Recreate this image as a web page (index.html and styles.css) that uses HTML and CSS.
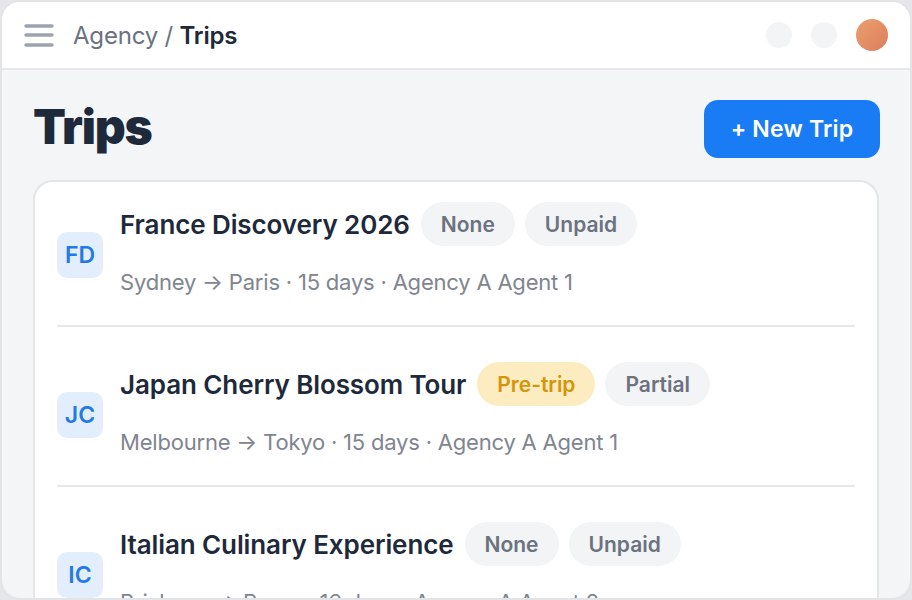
FILE: index.html
```html
<!DOCTYPE html>
<html>
<head>
<meta charset="utf-8">
<link rel="stylesheet" href="styles.css">
</head>
<body>
<div class="window">
  <header class="topbar">
    <svg class="menu" width="32" height="26" viewBox="0 0 32 26"><path d="M3 4h26M3 13h26M3 23h26" stroke="#9ca3af" stroke-width="3.4" stroke-linecap="round"/></svg>
    <div class="crumbs"><span class="crumb-muted">Agency / </span><span class="crumb-current">Trips</span></div>
    <div class="top-actions">
      <span class="dot"></span>
      <span class="dot"></span>
      <span class="avatar-user"></span>
    </div>
  </header>
  <main class="content">
    <div class="page-head">
      <h1 class="page-title">Trips</h1>
      <button class="btn-primary">+ New Trip</button>
    </div>
    <section class="card">
      <div class="trip">
        <div class="initials">FD</div>
        <div class="trip-body">
          <div class="trip-head">
            <span class="trip-name">France Discovery 2026</span>
            <span class="pill">None</span>
            <span class="pill">Unpaid</span>
          </div>
          <div class="trip-meta">Sydney → Paris · 15 days · Agency A Agent 1</div>
        </div>
      </div>
      <div class="trip">
        <div class="initials">JC</div>
        <div class="trip-body">
          <div class="trip-head">
            <span class="trip-name">Japan Cherry Blossom Tour</span>
            <span class="pill pill-warn">Pre-trip</span>
            <span class="pill">Partial</span>
          </div>
          <div class="trip-meta">Melbourne → Tokyo · 15 days · Agency A Agent 1</div>
        </div>
      </div>
      <div class="trip">
        <div class="initials">IC</div>
        <div class="trip-body">
          <div class="trip-head">
            <span class="trip-name">Italian Culinary Experience</span>
            <span class="pill">None</span>
            <span class="pill">Unpaid</span>
          </div>
          <div class="trip-meta">Brisbane → Rome · 16 days · Agency A Agent 2</div>
        </div>
      </div>
    </section>
  </main>
</div>
</body>
</html>
```

FILE: styles.css
```css
* { box-sizing: border-box; }
html, body { margin: 0; padding: 0; }
body {
  background: #e5e7eb;
  font-family: Inter, "Noto Sans", sans-serif;
  width: 912px;
  height: 600px;
  overflow: hidden;
}
.window {
  width: 912px;
  height: 600px;
  border: 2px solid #e2e4e8;
  border-radius: 20px;
  overflow: hidden;
  background: #f4f5f7;
  display: flex;
  flex-direction: column;
}
.topbar {
  height: 68px;
  flex: none;
  background: #fff;
  border-bottom: 2px solid #e5e7eb;
  display: flex;
  align-items: center;
  padding: 0 22px 0 21px;
}
.menu { display: block; margin-right: 18px; }
.crumbs { font-size: 24px; letter-spacing: -0.2px; }
.crumb-muted { color: #6b7280; }
.crumb-current { color: #1e293b; font-weight: 600; }
.top-actions {
  margin-left: auto;
  display: flex;
  align-items: center;
  gap: 19px;
}
.dot {
  width: 26px; height: 26px; border-radius: 50%;
  background: #f3f4f6;
}
.avatar-user {
  width: 32px; height: 32px; border-radius: 50%;
  background: linear-gradient(135deg, #eba06f, #dc7d5c);
}
.content {
  padding: 30px 31px 0 31px;
  flex: 1;
}
.page-head {
  display: flex;
  justify-content: space-between;
  align-items: center;
  height: 58px;
}
.page-title {
  margin: 0 0 4px 0;
  font-size: 48px;
  font-weight: 900;
  letter-spacing: -1.2px;
  color: #1e293b;
  line-height: 1;
}
.btn-primary {
  height: 58px;
  width: 176px;
  border: none;
  border-radius: 14px;
  background: #1a7cf5;
  color: #fff;
  font-family: inherit;
  font-size: 23px;
  font-weight: 600;
  letter-spacing: 0.2px;
  margin-right: -1px;
}
.card {
  margin-top: 22px;
  background: #fff;
  border: 2px solid #e3e5e9;
  border-radius: 20px;
  padding: 0 22px;
}
.trip {
  display: flex;
  align-items: center;
  gap: 17px;
  padding: 35px 0 28px;
  border-bottom: 2px solid #e5e7eb;
}
.trip:first-child { padding-top: 20px; }
.initials {
  width: 46px; height: 46px;
  border-radius: 10px;
  background: #e3eefc;
  color: #2479e8;
  font-size: 23px;
  font-weight: 600;
  display: flex;
  align-items: center;
  justify-content: center;
  flex: none;
  margin-top: 10px;
}
.trip-body { display: flex; flex-direction: column; gap: 21px; }
.trip-head { display: flex; align-items: center; gap: 10px; }
.trip-name {
  font-size: 26px;
  font-weight: 600;
  color: #1e293b;
  letter-spacing: -0.1px;
  margin-right: 1px;
}
.pill {
  height: 44px;
  padding: 0 20px;
  border-radius: 22px;
  background: #f3f4f6;
  color: #6b7280;
  font-size: 21px;
  font-weight: 600;
  display: inline-flex;
  align-items: center;
}
.pill-warn { background: #fdecbf; color: #d4940c; }
.trip-meta {
  font-size: 22px;
  color: #80858f;
  font-weight: 400;
  line-height: 30px;
  letter-spacing: -0.2px;
}
```
